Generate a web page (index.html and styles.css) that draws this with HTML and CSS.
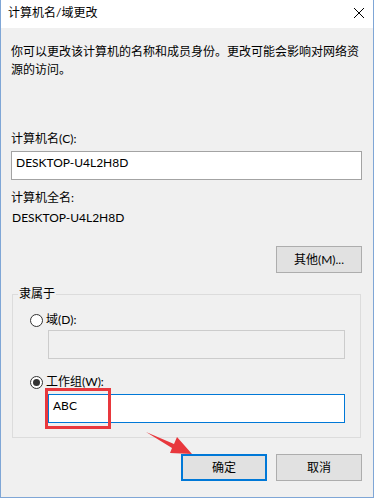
FILE: index.html
```html
<!DOCTYPE html>
<html lang="zh-CN">
<head>
<meta charset="utf-8">
<title>计算机名/域更改</title>
<link rel="stylesheet" href="styles.css">
</head>
<body>
<div class="window">
  <div class="titlebar">
    <span class="title">计算机名/域更改</span>
    <svg class="close" width="12" height="12" viewBox="0 0 12 12"><path d="M1 1 L11 11 M11 1 L1 11" stroke="#000" stroke-width="1" fill="none"/></svg>
  </div>
  <div class="content">
    <p class="desc">你可以更改该计算机的名称和成员身份。更改可能会影响对网络资源的访问。</p>
    <div class="label first">计算机名(C):</div>
    <div class="edit">DESKTOP-U4L2H8D</div>
    <div class="label full">计算机全名:</div>
    <div class="value">DESKTOP-U4L2H8D</div>
    <div class="row-right more-row">
      <div class="btn">其他(M)...</div>
    </div>
    <fieldset class="group">
      <legend>隶属于</legend>
      <div class="radio-row first-radio"><span class="radio"></span><span>域(D):</span></div>
      <div class="edit inset disabled"></div>
      <div class="radio-row second-radio"><span class="radio checked"></span><span>工作组(W):</span></div>
      <div class="edit inset focused">ABC</div>
    </fieldset>
    <div class="row-right actions">
      <div class="btn default">确定</div>
      <div class="btn">取消</div>
    </div>
  </div>
  <div class="highlight"></div>
  <svg class="arrow" width="374" height="498" viewBox="0 0 374 498">
    <polygon points="146,432 174,444 177,437 192,454 170,453 172,448" fill="#e8383d"/>
  </svg>
</div>
</body>
</html>
```
FILE: styles.css
```css
* { box-sizing: border-box; }
html, body { margin: 0; padding: 0; }
body {
  width: 374px;
  height: 498px;
  overflow: hidden;
  font-family: Lato, "Noto Sans CJK SC", sans-serif;
  font-size: 12px;
  line-height: 18px;
  color: #000;
  background: #f0f0f0;
}
.window {
  position: relative;
  width: 374px;
  height: 498px;
  border-left: 1px solid #7fa6d6;
  border-right: 1px solid #7fa6d6;
  border-bottom: 1px solid #7fa6d6;
  display: flex;
  flex-direction: column;
  background: #f0f0f0;
}
.titlebar {
  height: 28px;
  background: #fff;
  display: flex;
  align-items: center;
  justify-content: space-between;
  padding: 0 8px 0 7px;
}
.title { line-height: 18px; margin-top: -2px; }
.close { margin-top: -3px; }
.content {
  flex: 1;
  padding: 0 11px 0 10px;
  display: flex;
  flex-direction: column;
}
.desc { margin: 15px 0 0 0; }
.label { padding-left: 0; }
.label.first { margin-top: 51px; }
.edit {
  height: 29px;
  border: 1px solid #a3a3a3;
  background: #fff;
  padding: 2px 4px;
  line-height: 18px;
  margin-top: 3px;
}
.label.full { margin-top: 9px; }
.value { margin-top: 2px; padding-left: 1px; }
.row-right {
  display: flex;
  justify-content: flex-end;
  gap: 9px;
}
.more-row { margin-top: 19px; }
.btn {
  width: 86px;
  height: 27px;
  border: 1px solid #adadad;
  background: #e1e1e1;
  display: flex;
  align-items: center;
  justify-content: center;
}
.btn.default { border: 2px solid #0078d7; }
.group {
  margin: 12px 1px 0 1px;
  padding: 0 15px 14px 35px;
  border: 1px solid #dcdcdc;
  min-width: 0;
}
.group legend {
  padding: 0 1px;
  margin-left: -30px;
  line-height: 18px;
}
.radio-row {
  display: flex;
  align-items: center;
  margin-left: -18px;
  gap: 3px;
}
.first-radio { margin-top: 8px; }
.second-radio { margin-top: 14px; }
.radio {
  width: 13px;
  height: 13px;
  border-radius: 50%;
  border: 1px solid #333;
  background: #fff;
  display: inline-flex;
  align-items: center;
  justify-content: center;
}
.radio.checked::after {
  content: "";
  width: 7px;
  height: 7px;
  border-radius: 50%;
  background: #333;
}
.edit.inset { margin-top: 1px; }
.edit.disabled { background: #f0f0f0; border-color: #cccccc; }
.edit.focused { border-color: #0078d7; margin-top: 3px; }
.actions { margin-top: 16px; }
.highlight {
  position: absolute;
  left: 44px;
  top: 388px;
  width: 66px;
  height: 41px;
  border: 3px solid #e8383d;
}
.arrow {
  position: absolute;
  left: -1px;
  top: 0;
  pointer-events: none;
}
```
